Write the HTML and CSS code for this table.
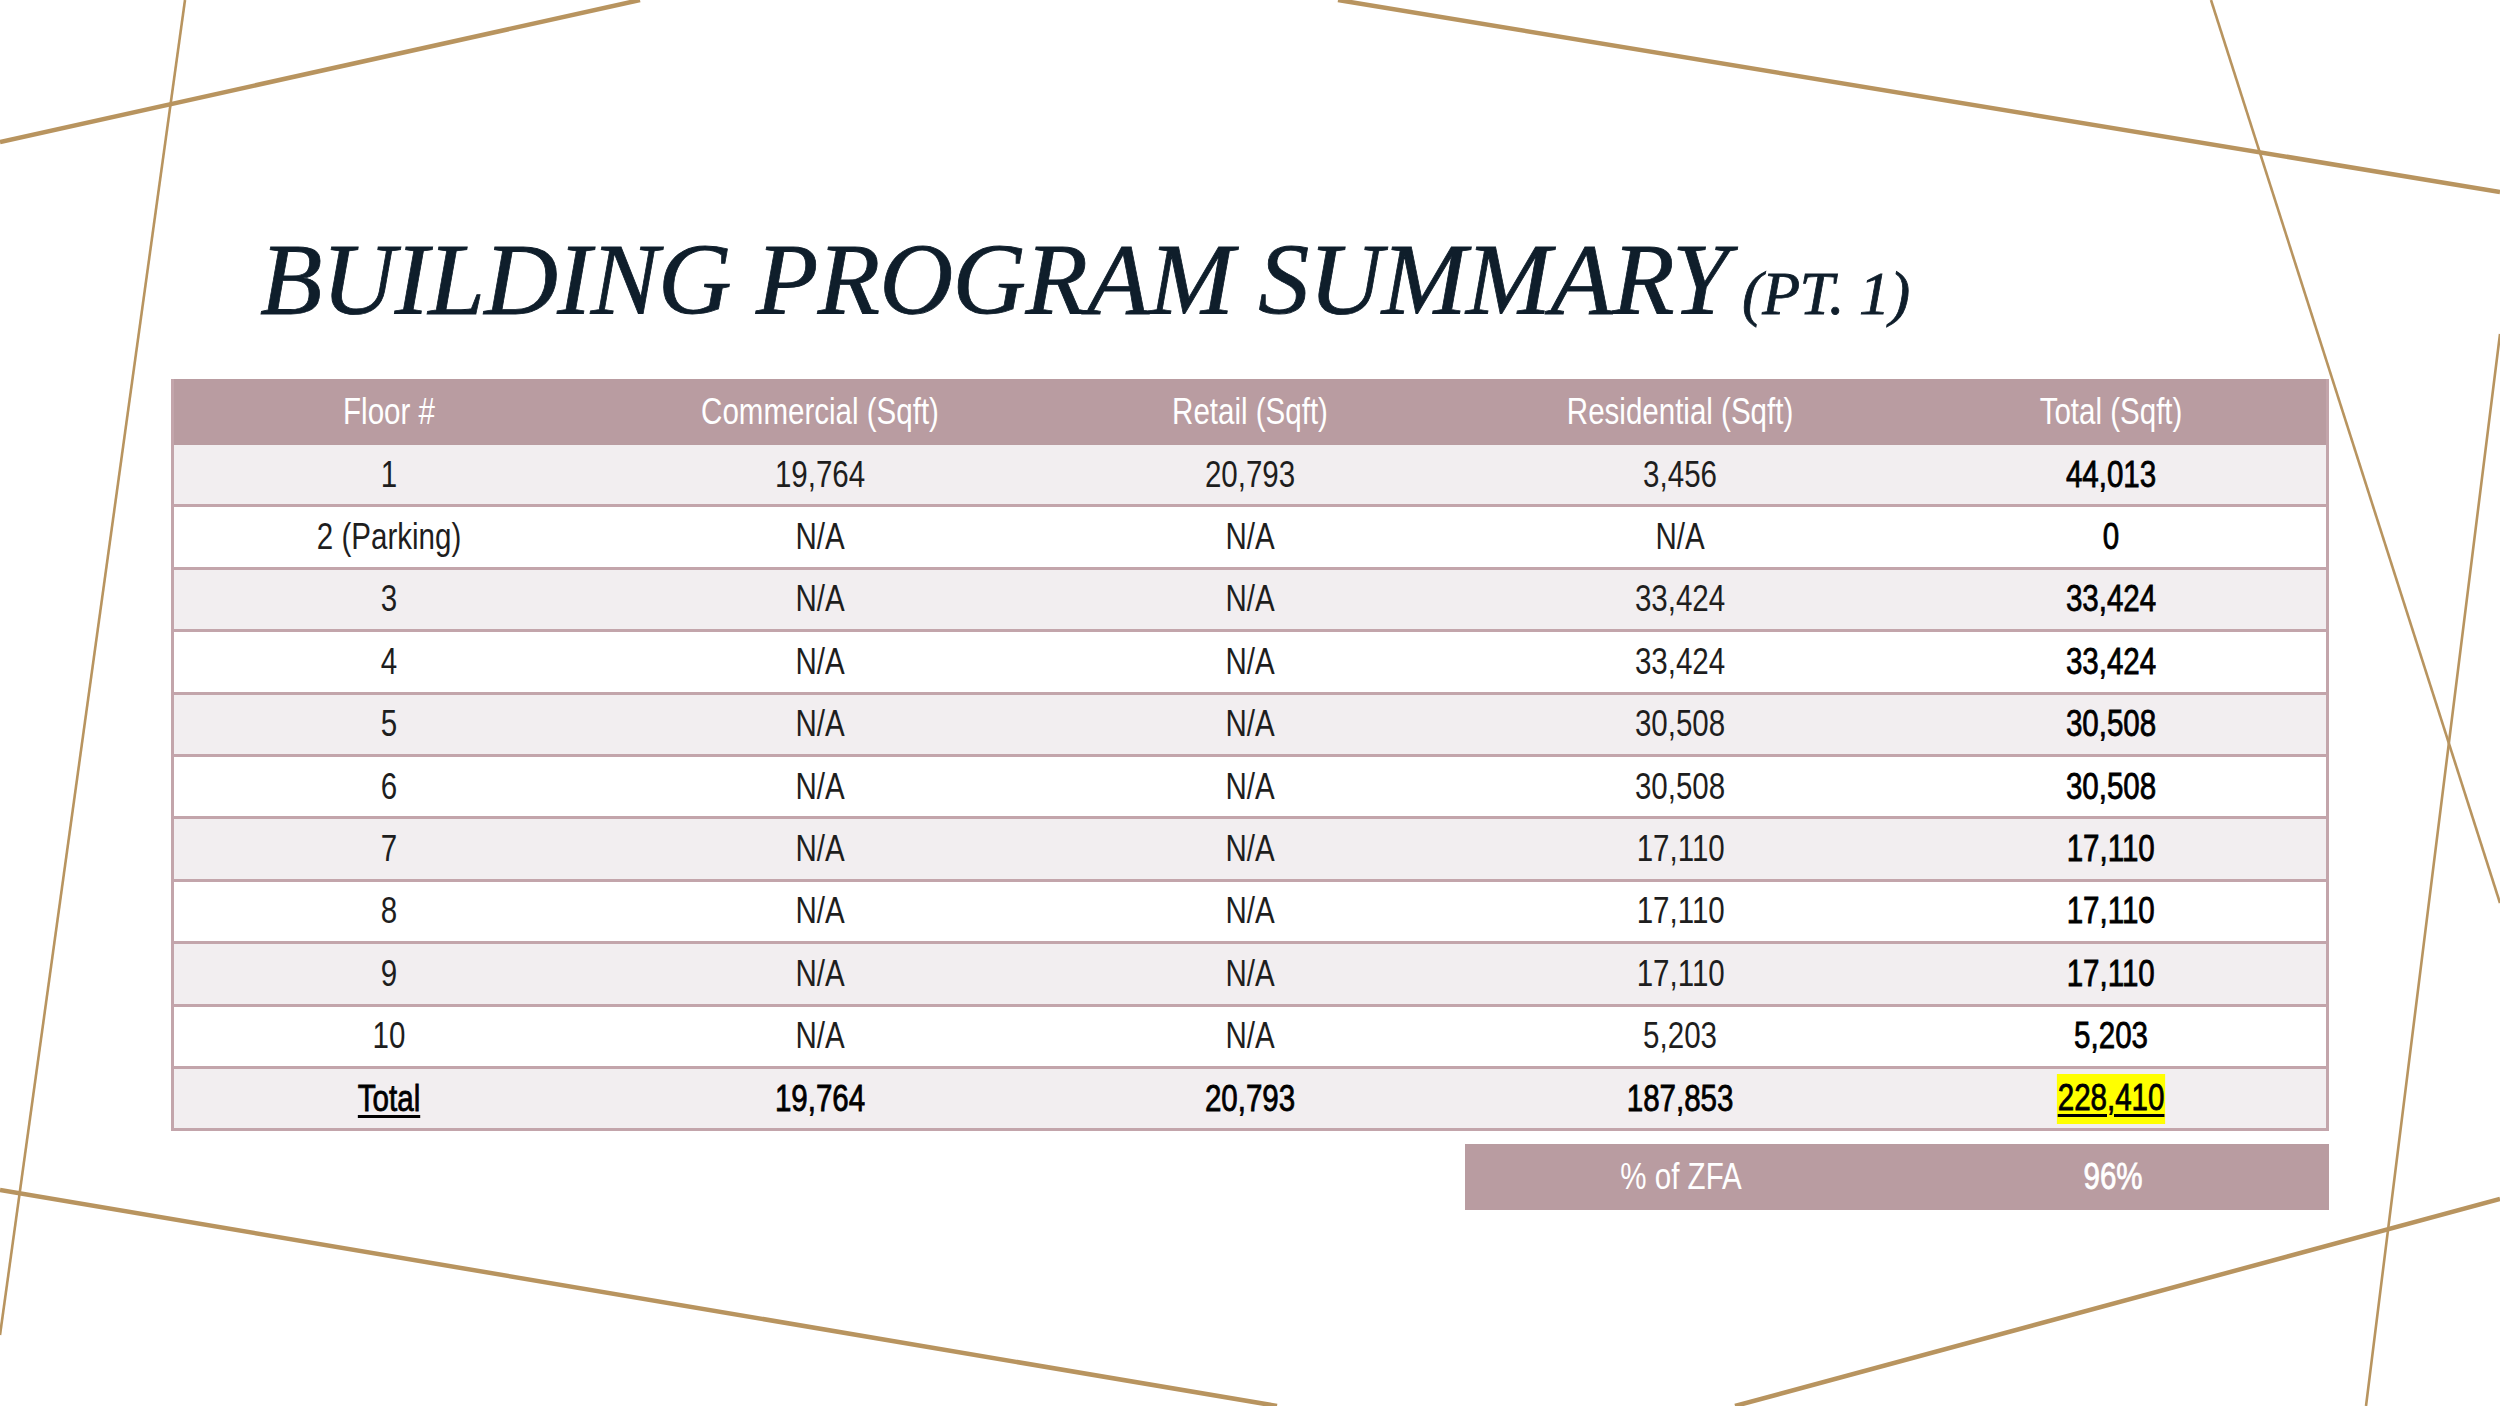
FILE: index.html
```html
<!DOCTYPE html>
<html>
<head>
<meta charset="utf-8">
<link rel="stylesheet" href="styles.css">
</head>
<body>
<div class="slide">
  <svg class="deco" width="2500" height="1406" viewBox="0 0 2500 1406">
    <g stroke="#b8945f" fill="none" stroke-linecap="butt">
      <line x1="0" y1="142" x2="640" y2="0" stroke-width="4.5"/>
      <line x1="185" y1="0" x2="0" y2="1335" stroke-width="2.6"/>
      <line x1="1338" y1="0" x2="2500" y2="192" stroke-width="4.5"/>
      <line x1="2211" y1="0" x2="2500" y2="903" stroke-width="2.6"/>
      <line x1="2500" y1="334" x2="2366" y2="1406" stroke-width="2.6"/>
      <line x1="2500" y1="1199" x2="1735" y2="1406" stroke-width="4.5"/>
      <line x1="0" y1="1190" x2="1277" y2="1406" stroke-width="4.5"/>
    </g>
  </svg>
  <div class="content">
    <h1 class="title">BUILDING PROGRAM SUMMARY <span class="pt">(PT. 1)</span></h1>
    <div class="table">
      <div class="row head">
        <div class="cell"><span class="t">Floor #</span></div>
        <div class="cell"><span class="t">Commercial (Sqft)</span></div>
        <div class="cell"><span class="t">Retail (Sqft)</span></div>
        <div class="cell"><span class="t">Residential (Sqft)</span></div>
        <div class="cell"><span class="t">Total (Sqft)</span></div>
      </div>
      <div class="row shade">
        <div class="cell"><span class="t">1</span></div><div class="cell"><span class="t">19,764</span></div><div class="cell"><span class="t">20,793</span></div><div class="cell"><span class="t">3,456</span></div><div class="cell strong"><span class="t">44,013</span></div>
      </div>
      <div class="row">
        <div class="cell"><span class="t">2 (Parking)</span></div><div class="cell"><span class="t">N/A</span></div><div class="cell"><span class="t">N/A</span></div><div class="cell"><span class="t">N/A</span></div><div class="cell strong"><span class="t">0</span></div>
      </div>
      <div class="row shade">
        <div class="cell"><span class="t">3</span></div><div class="cell"><span class="t">N/A</span></div><div class="cell"><span class="t">N/A</span></div><div class="cell"><span class="t">33,424</span></div><div class="cell strong"><span class="t">33,424</span></div>
      </div>
      <div class="row">
        <div class="cell"><span class="t">4</span></div><div class="cell"><span class="t">N/A</span></div><div class="cell"><span class="t">N/A</span></div><div class="cell"><span class="t">33,424</span></div><div class="cell strong"><span class="t">33,424</span></div>
      </div>
      <div class="row shade">
        <div class="cell"><span class="t">5</span></div><div class="cell"><span class="t">N/A</span></div><div class="cell"><span class="t">N/A</span></div><div class="cell"><span class="t">30,508</span></div><div class="cell strong"><span class="t">30,508</span></div>
      </div>
      <div class="row">
        <div class="cell"><span class="t">6</span></div><div class="cell"><span class="t">N/A</span></div><div class="cell"><span class="t">N/A</span></div><div class="cell"><span class="t">30,508</span></div><div class="cell strong"><span class="t">30,508</span></div>
      </div>
      <div class="row shade">
        <div class="cell"><span class="t">7</span></div><div class="cell"><span class="t">N/A</span></div><div class="cell"><span class="t">N/A</span></div><div class="cell"><span class="t">17,110</span></div><div class="cell strong"><span class="t">17,110</span></div>
      </div>
      <div class="row">
        <div class="cell"><span class="t">8</span></div><div class="cell"><span class="t">N/A</span></div><div class="cell"><span class="t">N/A</span></div><div class="cell"><span class="t">17,110</span></div><div class="cell strong"><span class="t">17,110</span></div>
      </div>
      <div class="row shade">
        <div class="cell"><span class="t">9</span></div><div class="cell"><span class="t">N/A</span></div><div class="cell"><span class="t">N/A</span></div><div class="cell"><span class="t">17,110</span></div><div class="cell strong"><span class="t">17,110</span></div>
      </div>
      <div class="row">
        <div class="cell"><span class="t">10</span></div><div class="cell"><span class="t">N/A</span></div><div class="cell"><span class="t">N/A</span></div><div class="cell"><span class="t">5,203</span></div><div class="cell strong"><span class="t">5,203</span></div>
      </div>
      <div class="row shade">
        <div class="cell strong"><span class="t ul">Total</span></div><div class="cell strong"><span class="t">19,764</span></div><div class="cell strong"><span class="t">20,793</span></div><div class="cell strong"><span class="t">187,853</span></div><div class="cell strong"><span class="t ul hl">228,410</span></div>
      </div>
    </div>
    <div class="zfa-row">
      <div class="zfa">
        <div class="cell"><span class="t">% of ZFA</span></div>
        <div class="cell strong"><span class="t">96%</span></div>
      </div>
    </div>
  </div>
</div>
</body>
</html>
```

FILE: styles.css
```css
html, body {
  margin: 0;
  padding: 0;
  background: #ffffff;
}
.slide {
  position: relative;
  width: 2500px;
  height: 1406px;
  overflow: hidden;
  background: #ffffff;
}
.deco {
  position: absolute;
  left: 0;
  top: 0;
  z-index: 0;
}
.content {
  position: relative;
  z-index: 1;
  padding: 225px 171px 0 171px;
}
.title {
  margin: 0 0 45px 0;
  padding-left: 89px;
  height: 109px;
  font-family: "Liberation Serif", "DejaVu Serif", serif;
  font-style: italic;
  font-weight: normal;
  font-size: 102px;
  line-height: 109px;
  color: #0f1e2b;
  letter-spacing: -0.6px;
  white-space: nowrap;
  -webkit-text-stroke: 0.8px #0f1e2b;
}
.title .pt {
  font-size: 62px;
  letter-spacing: -0.5px;
  margin-left: -11px;
}
.table {
  width: 2158px;
  box-sizing: border-box;
  border-left: 3px solid #c3a5ab;
  border-right: 3px solid #c3a5ab;
  font-family: "Liberation Sans", Arial, sans-serif;
  font-size: 36px;
}
.row {
  display: grid;
  grid-template-columns: repeat(5, 1fr);
  height: 62.4px;
  box-sizing: border-box;
  border-bottom: 3px solid #c3a5ab;
  background: #ffffff;
  color: #1e1e1e;
}
.row.shade {
  background: #f2eef0;
}
.row.head {
  height: 66px;
  border-bottom: none;
  background: #b99ca1;
  color: #ffffff;
}
.cell {
  display: flex;
  align-items: center;
  justify-content: center;
  white-space: nowrap;
}
.t {
  display: inline-block;
  transform: scaleX(0.82);
}
.cell.strong {
  color: #000000;
  -webkit-text-stroke: 0.8px #000000;
}
.ul {
  text-decoration: underline;
  text-decoration-thickness: 3px;
  text-underline-offset: 4px;
}
.hl {
  background: #ffff00;
  padding: 3px 1px 5px 1px;
}
.zfa-row {
  display: grid;
  grid-template-columns: 3px repeat(5, 1fr) 3px;
  width: 2158px;
  margin-top: 13px;
}
.zfa {
  grid-column: 5 / 8;
  display: grid;
  grid-template-columns: 1fr 1fr;
  height: 66px;
  background: #b99ca1;
  color: #ffffff;
  font-family: "Liberation Sans", Arial, sans-serif;
  font-size: 36px;
}
.zfa .cell.strong {
  color: #ffffff;
  -webkit-text-stroke: 0.8px #ffffff;
}
```
